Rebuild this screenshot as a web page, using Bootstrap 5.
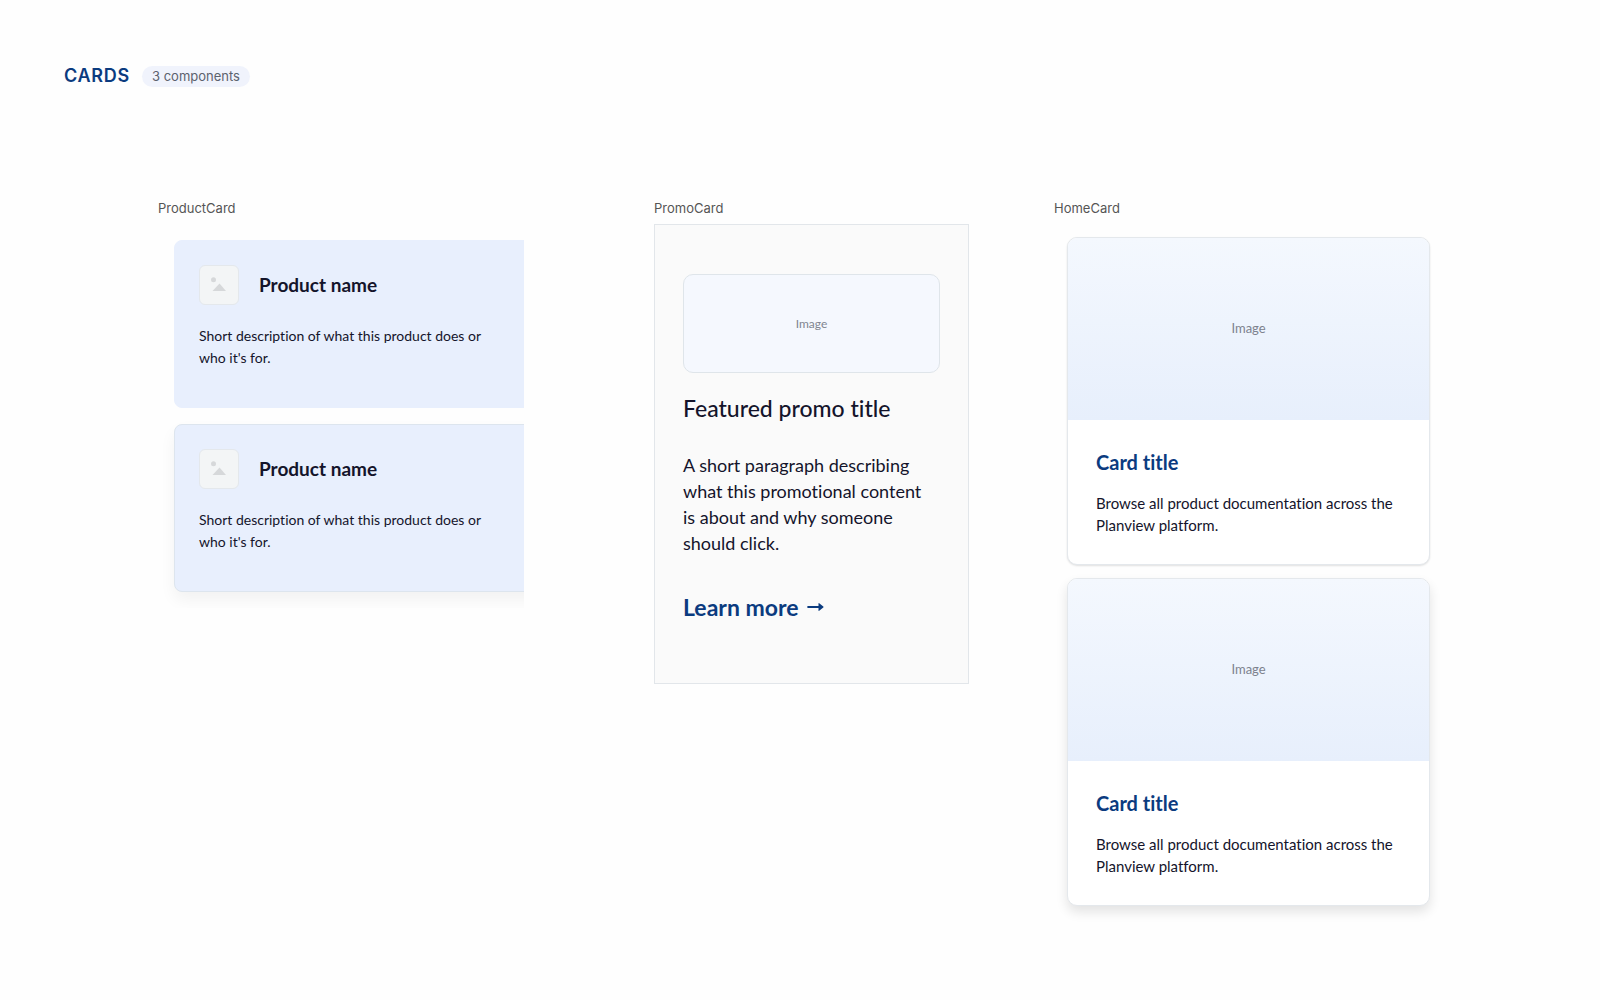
<!DOCTYPE html>
<html lang="en">
<head>
<meta charset="utf-8">
<meta name="viewport" content="width=device-width, initial-scale=1">
<title>Cards</title>
<link href="https://cdn.jsdelivr.net/npm/bootstrap@5.3.0/dist/css/bootstrap.min.css" rel="stylesheet">
<style>
  body { font-family: Lato, "Noto Sans", sans-serif; font-variant-ligatures: none; color: #14142b; background: #fefefe; }
  .ui-font { font-family: Inter, sans-serif; }
  .page-head { padding: 65px 64px 0; gap: 12px; }
  .page-head h1 { font-size: 18px; line-height: 22px; font-weight: 600; letter-spacing: 0.04em; color: #0b3b7f; }
  .count-pill { font-size: 13px; line-height: 21px; font-weight: 400; padding: 0 10px; color: #5c626e; background: #f0f3fc; }
  .board { display: grid; grid-template-columns: 248fr 200fr 273fr; padding: 113px 0 64px 158px; align-items: start; }
  .frame-label { font-size: 13px; line-height: 16px; font-weight: 400; margin-bottom: 8px; color: #555; }

  .product-frame { max-width: 366px; padding: 16px 0 16px 16px; gap: 16px; overflow: hidden; }
  .product-card { width: 384px; padding: 24px; border: 1px solid #e8effd; border-radius: 8px; background: #e8effd; }
  .product-card.is-raised { border-color: #dde5ee; box-shadow: 0 8px 16px rgba(0, 0, 0, .05); }
  .thumb { width: 40px; height: 40px; border: 1px solid #e4e8ec; border-radius: 6px; background: #f3f5f6; }
  .product-head { gap: 20px; margin-bottom: 20px; }
  .product-name { font-size: 19px; line-height: 24px; font-weight: 700; }
  .product-text { font-size: 14px; line-height: 22px; width: 300px; margin-bottom: 14px; }

  .promo-card { max-width: 315px; padding: 49px 28px 61px; border: 1px solid #e2e6ea; background: #fafafa; }
  .promo-image { height: 99px; border: 1px solid #dfe5ea; border-radius: 10px; background: #f5f8fe; font-size: 12px; color: #808590; }
  .promo-title { font-size: 23px; line-height: 30px; font-weight: 500; margin: 20px 0 29px; }
  .promo-text { font-size: 18px; line-height: 26px; padding-right: 8px; margin-bottom: 36px; }
  .promo-link { font-size: 23px; line-height: 30px; color: #0b3b7f; gap: 9px; }

  .home-frame { max-width: 389px; padding: 13px; gap: 13px; }
  .home-card { border: 1px solid #e4e8ec; border-radius: 10px; background: #fff; box-shadow: 0 1px 2px rgba(0, 0, 0, .12); overflow: hidden; }
  .home-card.is-raised { box-shadow: 0 6px 12px rgba(0, 0, 0, .11); }
  .home-image { height: 182px; background: linear-gradient(#f4f8fe, #e7effc); font-size: 13px; color: #7d828e; }
  .home-body { padding: 28px; }
  .home-title { font-size: 20px; line-height: 28px; font-weight: 700; margin-bottom: 16px; color: #0b3b7f; }
  .home-text { font-size: 15px; line-height: 22px; }
</style>
</head>
<body>
<header class="page-head ui-font d-flex align-items-center">
  <h1 class="mb-0">CARDS</h1>
  <span class="count-pill rounded-pill">3 components</span>
</header>
<main class="board">
  <section>
    <h2 class="frame-label ui-font">ProductCard</h2>
    <div class="product-frame d-flex flex-column">
      <article class="product-card">
        <div class="product-head d-flex align-items-center">
          <span class="thumb d-flex align-items-center justify-content-center"><svg width="16" height="16" viewBox="0 0 16 16" fill="#d6d8da" aria-hidden="true"><circle cx="2.500" cy="2.700" r="2.500"/><path d="M1.500 14 8.500 6.500 15 14z"/></svg></span>
          <h3 class="product-name mb-0">Product name</h3>
        </div>
        <p class="product-text">Short description of what this product does or who it's for.</p>
      </article>
      <article class="product-card is-raised">
        <div class="product-head d-flex align-items-center">
          <span class="thumb d-flex align-items-center justify-content-center"><svg width="16" height="16" viewBox="0 0 16 16" fill="#d6d8da" aria-hidden="true"><circle cx="2.500" cy="2.700" r="2.500"/><path d="M1.500 14 8.500 6.500 15 14z"/></svg></span>
          <h3 class="product-name mb-0">Product name</h3>
        </div>
        <p class="product-text">Short description of what this product does or who it's for.</p>
      </article>
    </div>
  </section>
  <section>
    <h2 class="frame-label ui-font">PromoCard</h2>
    <article class="promo-card">
      <div class="promo-image d-flex align-items-center justify-content-center">Image</div>
      <h3 class="promo-title">Featured promo title</h3>
      <p class="promo-text">A short paragraph describing what this promotional content is about and why someone should click.</p>
      <a class="promo-link d-inline-flex align-items-center fw-bold text-decoration-none" href="#">Learn more
        <svg width="17" height="10" viewBox="0 0 17 10" fill="currentColor" aria-hidden="true"><path d="M1 4h10.500V1.500Q11.500 .8 12.200 1.200L16.300 4.400Q16.900 5 16.300 5.600L12.200 8.800Q11.500 9.200 11.500 8.500V6H1Q.2 6 .2 5T1 4z"/></svg>
      </a>
    </article>
  </section>
  <section>
    <h2 class="frame-label ui-font">HomeCard</h2>
    <div class="home-frame d-flex flex-column">
      <article class="home-card">
        <div class="home-image d-flex align-items-center justify-content-center">Image</div>
        <div class="home-body">
          <h3 class="home-title">Card title</h3>
          <p class="home-text mb-0">Browse all product documentation across the Planview platform.</p>
        </div>
      </article>
      <article class="home-card is-raised">
        <div class="home-image d-flex align-items-center justify-content-center">Image</div>
        <div class="home-body">
          <h3 class="home-title">Card title</h3>
          <p class="home-text mb-0">Browse all product documentation across the Planview platform.</p>
        </div>
      </article>
    </div>
  </section>
</main>
<script src="https://cdn.jsdelivr.net/npm/bootstrap@5.3.0/dist/js/bootstrap.bundle.min.js"></script>
</body>
</html>
